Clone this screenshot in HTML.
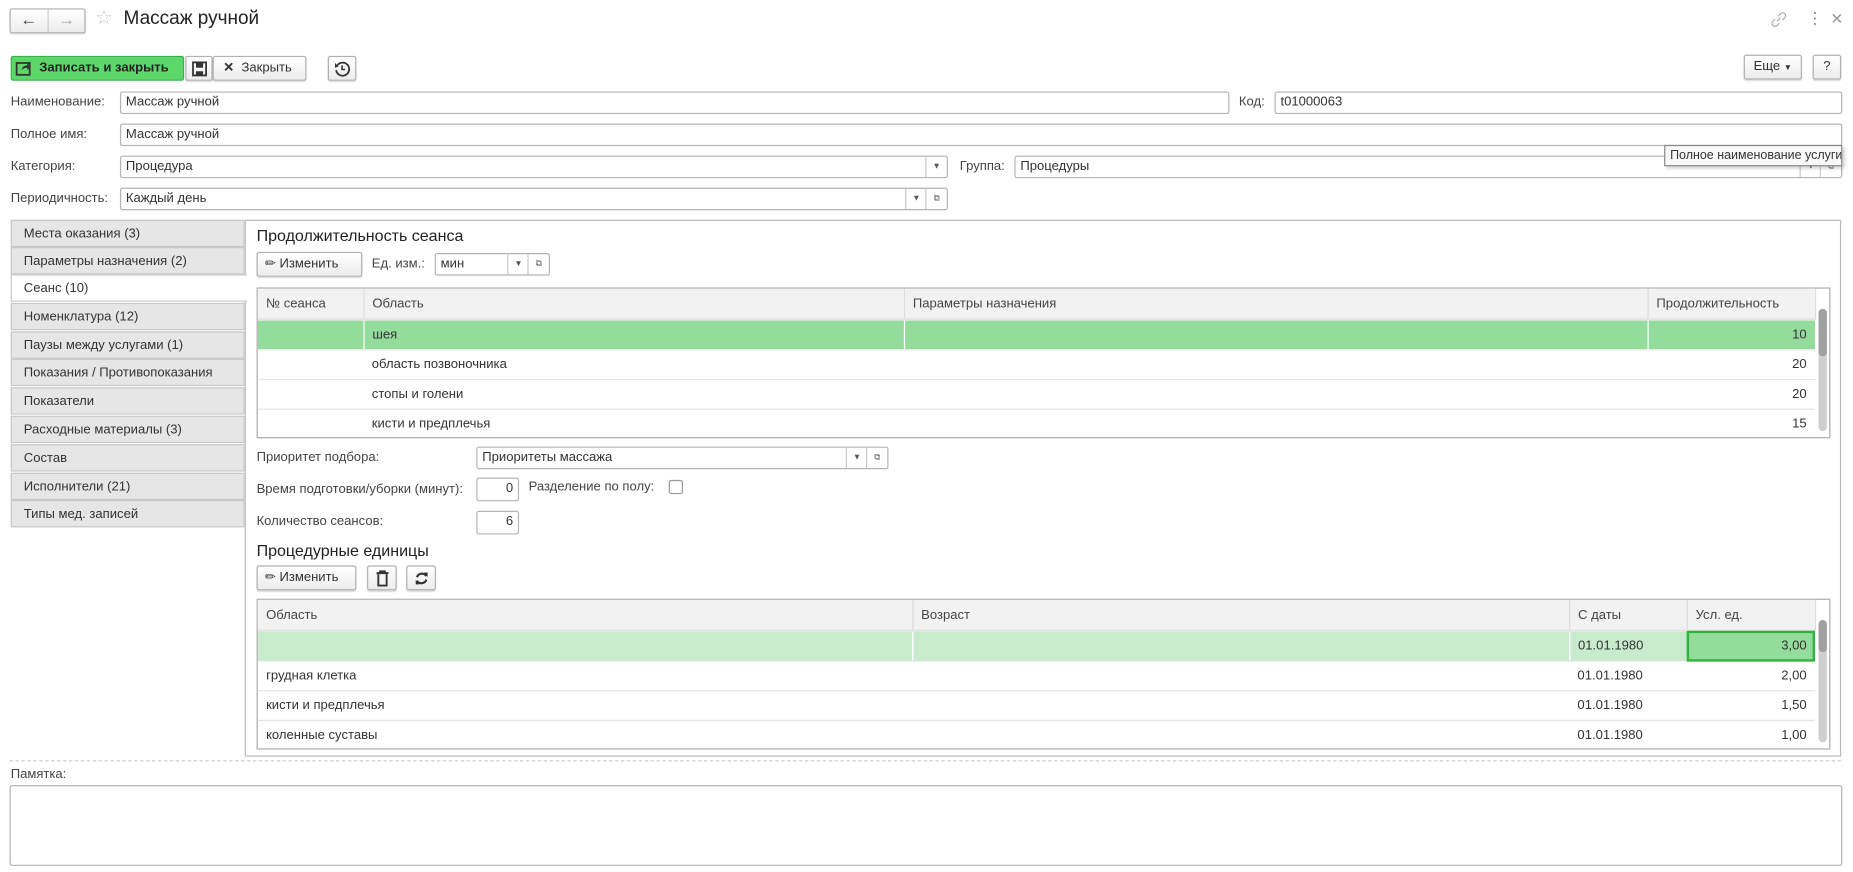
<!DOCTYPE html>
<html><head><meta charset="utf-8"><style>
html,body{margin:0;padding:0;background:#fff;overflow:hidden}
body{width:1853px;height:872px}
#r{position:absolute;left:0;top:0;width:1560px;height:734px;transform:scale(1.18782);transform-origin:0 0;font-family:"Liberation Sans",Arial,sans-serif;font-size:11px;color:#333}
.a{position:absolute}
.f{position:absolute;border:1px solid #b4b4b4;border-radius:2px;background:#fff;line-height:17px;padding-left:4px;box-sizing:border-box;height:19px;white-space:nowrap}
.btn{position:absolute;border:1px solid #b0b0b0;border-radius:2px;background:linear-gradient(#fff,#ececec);box-shadow:0 1px 1px rgba(0,0,0,.15);box-sizing:border-box;height:21px;line-height:19px;text-align:center;white-space:nowrap}
.lbl{position:absolute;color:#444;white-space:nowrap}
.tab{position:absolute;left:9px;width:197px;height:23px;background:#e6e6e6;border:1px solid #c8c8c8;box-sizing:border-box;line-height:22px;padding-left:10px;color:#333}
.dd{position:absolute;top:0;bottom:0;width:17px;border-left:1px solid #c8c8c8;font-size:7px;text-align:center;line-height:17px;color:#555;padding:0}
table{border-collapse:collapse;position:absolute;table-layout:fixed}
td{height:24px;padding:0 7px;border-bottom:1px solid #e4e4e4;white-space:nowrap;overflow:hidden}
th{height:25px;background:#f2f2f2;font-weight:normal;text-align:left;padding:0 7px;border-right:1px solid #dcdcdc;border-bottom:2px solid #e4e4e4;color:#444}
.g td{background:#94dc9b}
.lg td{background:#c8ebcd}
.rt{text-align:right}
</style></head><body><div id="r">
<div class="btn" style="left:8px;top:7px;width:64px;height:21px"></div>
<div class="a" style="left:40px;top:8px;width:1px;height:19px;background:#ccc"></div>
<div class="a" style="left:17px;top:8px;font-size:14px;color:#444">&#8592;</div>
<div class="a" style="left:49px;top:8px;font-size:14px;color:#aaa">&#8594;</div>
<div class="a" style="left:80px;top:5px;font-size:17px;color:#ccc">&#9734;</div>
<div class="a" style="left:104px;top:7px;font-size:16px;color:#222">Массаж ручной</div>
<svg class="a" style="left:1491px;top:10px" width="13" height="13"><path d="M5 8 L8 5 M6 3.5 L8 1.5 A2.1 2.1 0 0 1 11.5 5 L9.5 7 M7 9.5 L5 11.5 A2.1 2.1 0 0 1 1.5 8 L3.5 6" fill="none" stroke="#aaa" stroke-width="1"/></svg>
<div class="a" style="left:1521px;top:7px;font-size:14px;color:#888">&#8942;</div>
<div class="a" style="left:1541px;top:8px;font-size:13px;color:#999">&#10005;</div>
<div class="a" style="left:9px;top:47px;width:146px;height:21px;background:#5cd86a;border:1px solid #3bb04a;box-sizing:border-box;border-radius:2px"></div>
<svg class="a" style="left:13px;top:50px" width="14" height="14"><rect x="1" y="3" width="11" height="10" fill="none" stroke="#333" stroke-width="1.5"/><path d="M5 9 Q6 5 10 5 V3 L13 6 L10 9 V7 Q7 7 5 9Z" fill="#333"/></svg>
<div class="a" style="left:33px;top:51px;color:#222;font-weight:bold;font-size:11px">Записать и закрыть</div>
<div class="btn" style="left:156px;top:47px;width:23px"><svg width="14" height="14" style="margin-top:3px"><rect x="1.5" y="1.5" width="11" height="11" fill="none" stroke="#333" stroke-width="1.5"/><rect x="4" y="2" width="6" height="4" fill="#333"/><rect x="4" y="9" width="6" height="3" fill="#333"/></svg></div>
<div class="btn" style="left:179px;top:47px;width:79px;text-align:left;padding-left:8px"><b style="font-size:11px">&#10005;</b>&nbsp; Закрыть</div>
<div class="btn" style="left:276px;top:47px;width:24px"><svg width="14" height="14" style="margin-top:3px"><path d="M3 4 A5.5 5.5 0 1 1 2 8" fill="none" stroke="#333" stroke-width="1.5"/><path d="M1 2 L4 5 L1 6Z" fill="#333"/><path d="M7 4 V7.5 H9.5" fill="none" stroke="#333" stroke-width="1.3"/></svg></div>
<div class="btn" style="left:1468px;top:46px;width:49px">Еще <span style="font-size:7px">&#9660;</span></div>
<div class="btn" style="left:1526px;top:46px;width:24px">?</div>
<div class="lbl" style="left:9px;top:80px">Наименование:</div>
<div class="f" style="left:101px;top:77px;width:934px">Массаж ручной</div>
<div class="lbl" style="left:1043px;top:80px">Код:</div>
<div class="f" style="left:1073px;top:77px;width:478px">t01000063</div>
<div class="lbl" style="left:9px;top:107px">Полное имя:</div>
<div class="f" style="left:101px;top:104px;width:1450px">Массаж ручной</div>
<div class="lbl" style="left:9px;top:134px">Категория:</div>
<div class="f" style="left:101px;top:131px;width:697px">Процедура<div class="dd" style="right:0">&#9660;</div></div>
<div class="lbl" style="left:808px;top:134px">Группа:</div>
<div class="f" style="left:854px;top:131px;width:697px">Процедуры<div class="dd" style="right:17px">&#9660;</div><div class="dd" style="right:0">&#10697;</div></div>
<div class="a" style="left:1401px;top:122px;width:150px;height:18px;border:1px solid #888;background:#f8f8f8;box-sizing:border-box;box-shadow:2px 2px 3px rgba(0,0,0,.2);font-size:10.5px;line-height:16px;padding-left:4px;color:#333;white-space:nowrap;overflow:hidden">Полное наименование услуги</div>
<div class="lbl" style="left:9px;top:161px">Периодичность:</div>
<div class="f" style="left:101px;top:158px;width:697px">Каждый день<div class="dd" style="right:17px">&#9660;</div><div class="dd" style="right:0">&#10697;</div></div>
<div class="a" style="left:206px;top:185px;width:1344px;height:452px;border:1px solid #bbb;box-sizing:border-box"></div>
<div class="tab" style="top:185px">Места оказания (3)</div>
<div class="tab" style="top:208px">Параметры назначения (2)</div>
<div class="tab" style="top:231px;background:#fff;width:199px;border-right:none">Сеанс (10)</div>
<div class="tab" style="top:255px">Номенклатура (12)</div>
<div class="tab" style="top:279px">Паузы между услугами (1)</div>
<div class="tab" style="top:302px">Показания / Противопоказания</div>
<div class="tab" style="top:326px">Показатели</div>
<div class="tab" style="top:350px">Расходные материалы (3)</div>
<div class="tab" style="top:374px">Состав</div>
<div class="tab" style="top:398px">Исполнители (21)</div>
<div class="tab" style="top:421px">Типы мед. записей</div>
<div class="a" style="left:216px;top:191px;font-size:13.5px;color:#222">Продолжительность сеанса</div>
<div class="btn" style="left:216px;top:212px;width:89px;text-align:left;padding-left:6px">&#9999;&#65038; Изменить</div>
<div class="lbl" style="left:313px;top:216px">Ед. изм.:</div>
<div class="f" style="left:366px;top:213px;width:97px">мин<div class="dd" style="right:17px">&#9660;</div><div class="dd" style="right:0">&#10697;</div></div>
<div class="a" style="left:216px;top:242px;width:1325px;height:127px;border:1px solid #aaa;box-sizing:border-box"></div>
<table style="left:217px;top:243px;width:1311px">
<colgroup><col style="width:89px"><col style="width:455px"><col style="width:626px"><col style="width:141px"></colgroup>
<tr><th>№ сеанса</th><th>Область</th><th>Параметры назначения</th><th>Продолжительность</th></tr>
<tr class="g"><td></td><td style="border-left:1px solid #fff">шея</td><td style="border-left:1px solid #fff"></td><td class="rt" style="border-left:1px solid #fff">10</td></tr>
<tr><td></td><td>область позвоночника</td><td></td><td class="rt">20</td></tr>
<tr><td></td><td>стопы и голени</td><td></td><td class="rt">20</td></tr>
<tr><td style="border:none"></td><td style="border:none">кисти и предплечья</td><td style="border:none"></td><td class="rt" style="border:none">15</td></tr>
</table>
<div class="a" style="left:1531px;top:260px;width:7px;height:103px;background:#cfcfcf;border-radius:4px"></div>
<div class="a" style="left:1531px;top:260px;width:7px;height:40px;background:#a0a0a0;border-radius:4px"></div>
<div class="lbl" style="left:216px;top:379px">Приоритет подбора:</div>
<div class="f" style="left:401px;top:376px;width:347px">Приоритеты массажа<div class="dd" style="right:17px">&#9660;</div><div class="dd" style="right:0">&#10697;</div></div>
<div class="lbl" style="left:216px;top:406px">Время подготовки/уборки (минут):</div>
<div class="f" style="left:401px;top:402px;width:36px;height:20px;text-align:right;padding-right:4px">0</div>
<div class="lbl" style="left:445px;top:404px">Разделение по полу:</div>
<div class="a" style="left:563px;top:404px;width:12px;height:12px;border:1px solid #999;box-sizing:border-box;border-radius:2px"></div>
<div class="lbl" style="left:216px;top:433px">Количество сеансов:</div>
<div class="f" style="left:401px;top:430px;width:36px;height:20px;text-align:right;padding-right:4px">6</div>
<div class="a" style="left:216px;top:456px;font-size:13.5px;color:#222">Процедурные единицы</div>
<div class="btn" style="left:216px;top:476px;width:84px;text-align:left;padding-left:6px">&#9999;&#65038; Изменить</div>
<div class="btn" style="left:309px;top:476px;width:25px"><svg width="12" height="14" style="margin-top:3px"><path d="M1 2.5 H11 M4 2.5 V1 H8 V2.5 M2.5 3.5 V13 H9.5 V3.5" fill="none" stroke="#333" stroke-width="1.6"/></svg></div>
<div class="btn" style="left:342px;top:476px;width:25px"><svg width="14" height="14" style="margin-top:3px"><path d="M11 5 A4.5 4.5 0 0 0 3 6 M3 9 A4.5 4.5 0 0 0 11 8" fill="none" stroke="#333" stroke-width="1.8"/><path d="M9 2 L12 2 L12 6Z M5 12 L2 12 L2 8Z" fill="#333"/></svg></div>
<div class="a" style="left:216px;top:504px;width:1325px;height:127px;border:1px solid #aaa;box-sizing:border-box"></div>
<table style="left:217px;top:505px;width:1311px">
<colgroup><col style="width:551px"><col style="width:553px"><col style="width:99px"><col style="width:108px"></colgroup>
<tr><th>Область</th><th>Возраст</th><th>С даты</th><th>Усл. ед.</th></tr>
<tr class="lg"><td></td><td style="border-left:1px solid #fff"></td><td style="border-left:1px solid #fff">01.01.1980</td><td class="rt" style="background:#94dc9b;outline:2px solid #2fb43e;outline-offset:-2px">3,00</td></tr>
<tr><td>грудная клетка</td><td></td><td>01.01.1980</td><td class="rt">2,00</td></tr>
<tr><td>кисти и предплечья</td><td></td><td>01.01.1980</td><td class="rt">1,50</td></tr>
<tr><td style="border:none">коленные суставы</td><td style="border:none"></td><td style="border:none">01.01.1980</td><td class="rt" style="border:none">1,00</td></tr>
</table>
<div class="a" style="left:1531px;top:522px;width:7px;height:103px;background:#cfcfcf;border-radius:4px"></div>
<div class="a" style="left:1531px;top:522px;width:7px;height:27px;background:#a0a0a0;border-radius:4px"></div>
<div class="a" style="left:8px;top:640px;width:1542px;border-top:1px dashed #ccc"></div>
<div class="lbl" style="left:9px;top:646px">Памятка:</div>
<div class="a" style="left:8px;top:661px;width:1543px;height:68px;border:1px solid #b4b4b4;border-radius:2px;box-sizing:border-box"></div>
</div></body></html>
